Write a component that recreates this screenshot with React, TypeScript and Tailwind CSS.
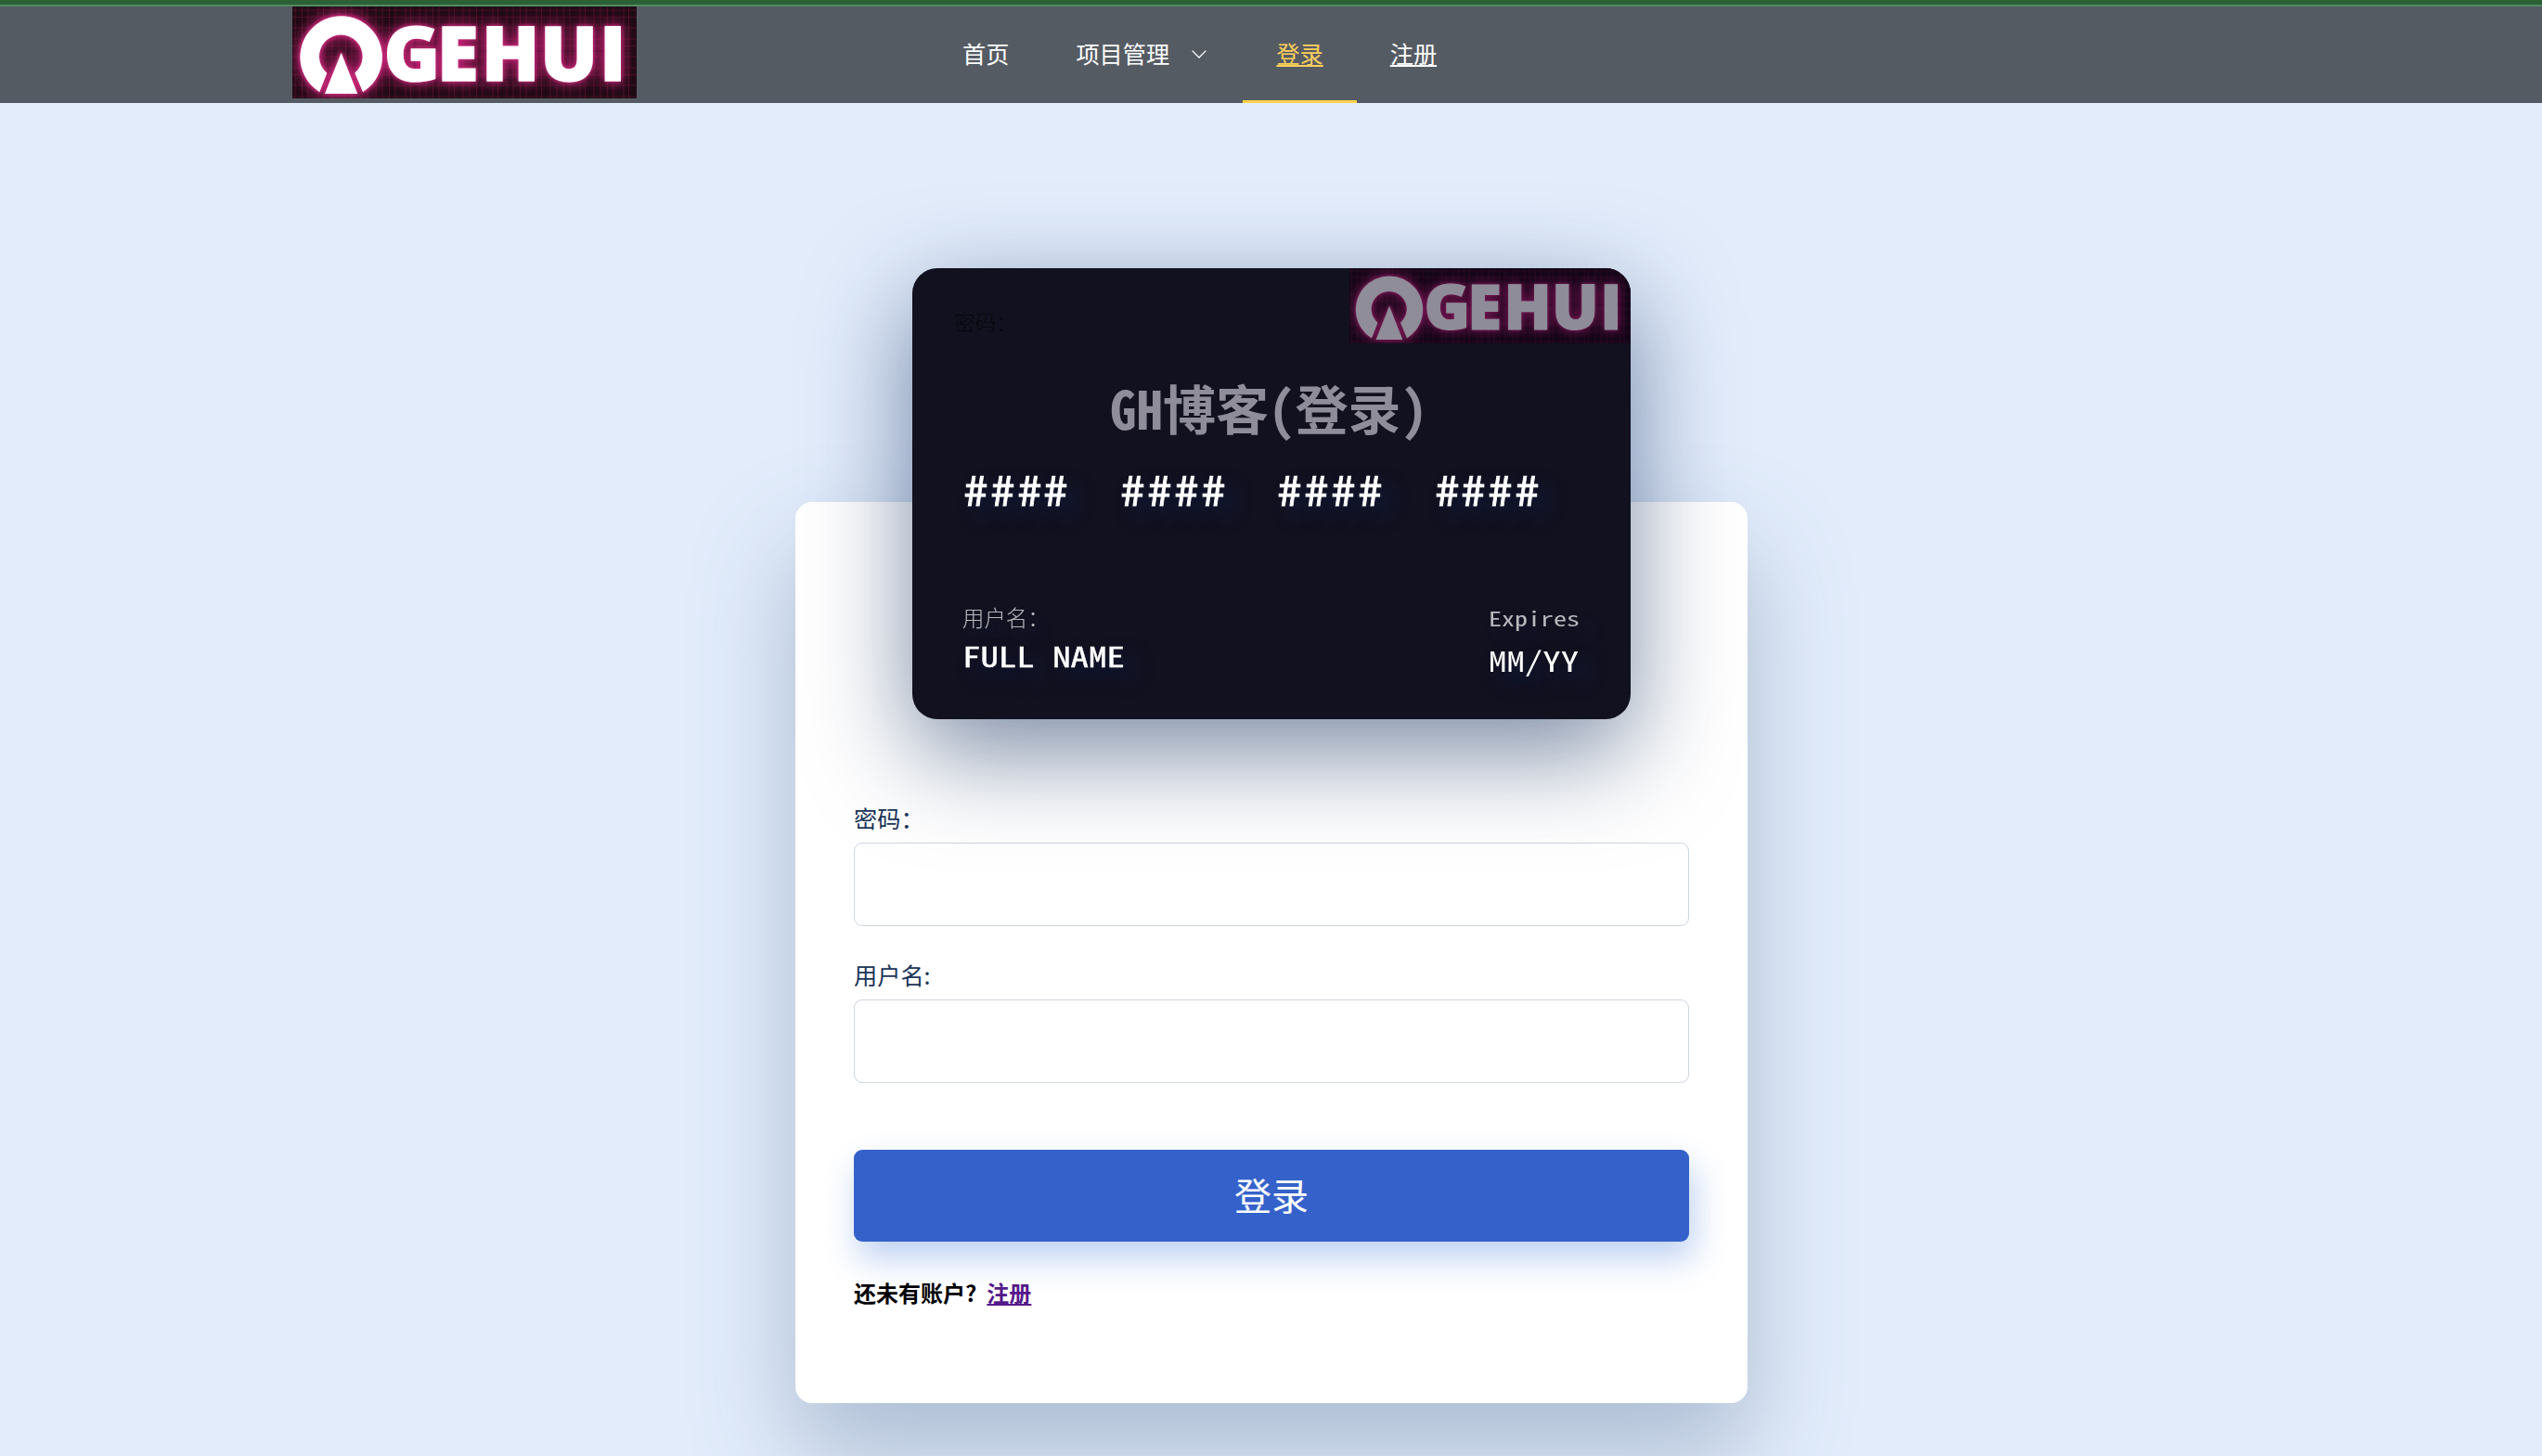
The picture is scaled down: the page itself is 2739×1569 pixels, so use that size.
import React from 'react';

const HASH = '#### #### #### ####';

function Logo({ id, className }: { id: string; className: string }) {
  const mark = (
    <>
      <path d="M29.3 92.2 A44.3 44.3 0 1 1 76 92.2 L67.3 71.7 A23.3 23.3 0 1 0 37.3 71.7 Z" />
      <path d="M52.7 49.7 L70.2 94 L35 94 Z" />
    </>
  );
  const word = (
    <text
      x="98.6 155.8 203.8 267 331"
      y="80.4"
      fontFamily="'Open Sans', 'Noto Sans', sans-serif"
      fontWeight="800"
      fontSize="82"
    >
      GEHUI
    </text>
  );
  return (
    <svg viewBox="0 0 371 99" preserveAspectRatio="none" className={className}>
      <defs>
        <pattern id={id + 'grid'} width="47" height="31" patternUnits="userSpaceOnUse">
          <path
            d="M3 0V31M10.5 0V31M17 0V31M28 0V31M33.5 0V31M43 0V31M0 4H47M0 11.5H47M0 23H47"
            stroke="#c01f58"
            strokeWidth="0.9"
            opacity="0.28"
          />
          <path d="M13 0V31M38 0V31M0 17H47" stroke="#000" strokeWidth="1.6" opacity="0.12" />
        </pattern>
        <filter id={id + 'wide'} x="-10%" y="-30%" width="120%" height="160%">
          <feGaussianBlur stdDeviation="8" />
        </filter>
        <filter id={id + 'near'} x="-10%" y="-30%" width="120%" height="160%">
          <feGaussianBlur stdDeviation="2.2" />
        </filter>
      </defs>
      <rect width="371" height="99" fill="#1f0b14" />
      <g fill="#c92478" stroke="#c92478" strokeWidth="4" filter={`url(#${id}wide)`} opacity="0.95">
        {mark}
        {word}
      </g>
      <rect width="371" height="99" fill={`url(#${id}grid)`} />
      <g fill="#d92f86" stroke="#d92f86" strokeWidth="1.8" filter={`url(#${id}near)`}>
        {mark}
        {word}
      </g>
      <g fill="#fff">{mark}</g>
      <g fill="#fff" stroke="#fff" strokeWidth="1.4">
        {word}
      </g>
    </svg>
  );
}

function Header() {
  return (
    <header className="flex h-[111px] w-full flex-col bg-[#555b63] text-[25.2px] leading-[36px] text-white">
      <div className="h-[7px] shrink-0 border-b-2 border-[#518a62] bg-[#2c6135]" />
      <div className="flex h-[104px] items-start pl-[315px]">
        <Logo id="head" className="h-[99px] w-[371px]" />
        <nav className="ml-[315px] flex h-full">
          <a className="flex items-center px-9 pb-1">首页</a>
          <a className="flex w-[216px] items-center pb-1 pl-9">
            项目管理
            <svg viewBox="0 0 16 9" className="mt-[3px] ml-[24px] h-[9px] w-4" fill="none" stroke="#fff" strokeWidth="1.3">
              <path d="M0.6 0.6 L8 8 L15.4 0.6" />
            </svg>
          </a>
          <a className="flex items-center border-b-[3px] border-[#ffd04b] px-9 pb-px text-[#ffd05b] underline decoration-2 underline-offset-[2px]">
            登录
          </a>
          <a className="flex items-center px-9 pb-1 underline decoration-2 underline-offset-[2px]">注册</a>
        </nav>
      </div>
    </header>
  );
}

function Card() {
  return (
    <section className="relative z-10 h-[486px] w-[774px] overflow-visible rounded-[27px] bg-[#121120] font-['Noto_Sans_Mono_CJK_SC','Noto_Sans_CJK_SC',monospace] text-white shadow-[0_36px_108px_0_rgba(14,42,90,0.55)]">
      <div className="flex h-full flex-col overflow-hidden rounded-[27px]">
        <div className="flex h-[81px] items-start justify-between">
          <div className="pt-[40px] pl-[45px] font-['Noto_Sans_CJK_SC',sans-serif] text-[22.5px] leading-[34px] font-light text-[#07070b]">
            密码：
          </div>
          <div className="h-[81px] w-[303px] bg-[#06021d]">
            <Logo id="card" className="h-[81px] w-[303px] opacity-55" />
          </div>
        </div>
        <h1 className="mt-[28px] pl-[213px] text-[57px] leading-[80px] font-bold whitespace-nowrap text-[#8f8d99]">
          GH博客(登录)
        </h1>
        <div className="mt-[13px] flex pl-[54px] text-[44px] leading-[70px] font-medium [-webkit-text-stroke:0.8px_white] [text-shadow:10px_11px_18px_rgba(14,42,90,0.6)]">
          {HASH.split('').map((c, i) =>
            c === ' ' ? (
              <span key={i} className="w-[54px]" />
            ) : (
              <span key={i} className="flex w-[28.8px] scale-x-[1.16] justify-center">
                {c}
              </span>
            ),
          )}
        </div>
        <div className="mt-[86px] flex justify-between pr-[54px] pl-[54px] [text-shadow:10px_11px_18px_rgba(14,42,90,0.6)]">
          <div>
            <div className="font-['Noto_Sans_CJK_SC',sans-serif] text-[23.4px] leading-[36px] font-light opacity-70">
              用户名：
            </div>
            <div className="mt-px w-fit origin-left scale-x-[1.322] text-[29.4px] leading-[44px] font-medium whitespace-pre [-webkit-text-stroke:0.4px_white]">
              FULL NAME
            </div>
          </div>
          <div className="w-[99px]">
            <div className="mt-px w-fit origin-left scale-x-[1.322] text-[21.2px] leading-[36px] opacity-70">Expires</div>
            <div className="mt-[5px] w-fit origin-left scale-x-[1.322] text-[29.4px] leading-[44px]">MM/YY</div>
          </div>
        </div>
      </div>
    </section>
  );
}

function Field({ label, type }: { label: string; type: string }) {
  return (
    <label className="mb-9 block text-[25.2px] leading-[32px] text-[#1a3458]">
      {label}
      <input type={type} className="mt-[11px] block h-[90px] w-full rounded-[9px] border border-[#ced6e0] bg-white px-6" />
    </label>
  );
}

export default function App() {
  return (
    <div className="h-[1569px] w-full overflow-hidden bg-[#e2ecfb] font-['Noto_Sans_CJK_SC',sans-serif]">
      <Header />
      <main className="flex flex-col items-center pt-[178px] pl-[1px]">
        <Card />
        <form className="-mt-[234px] h-[971px] w-[1026px] rounded-[18px] bg-white px-[63px] pt-[324px] shadow-[0_54px_108px_0_rgba(90,116,148,0.4)]">
          <Field label="密码：" type="password" />
          <Field label="用户名:" type="text" />
          <button
            type="button"
            className="mt-[72px] flex h-[99px] w-full items-center justify-center rounded-[9px] bg-[#3562ca] pb-[3px] text-[40px] text-white shadow-[5px_18px_36px_0_rgba(35,100,210,0.3)]"
          >
            登录
          </button>
          <p className="mt-[37px] text-[24px] leading-[36px] font-bold text-black">
            还未有账户?
            <a className="ml-[11px] text-[#551a8b] underline decoration-2 underline-offset-[2px]">注册</a>
          </p>
        </form>
      </main>
    </div>
  );
}
